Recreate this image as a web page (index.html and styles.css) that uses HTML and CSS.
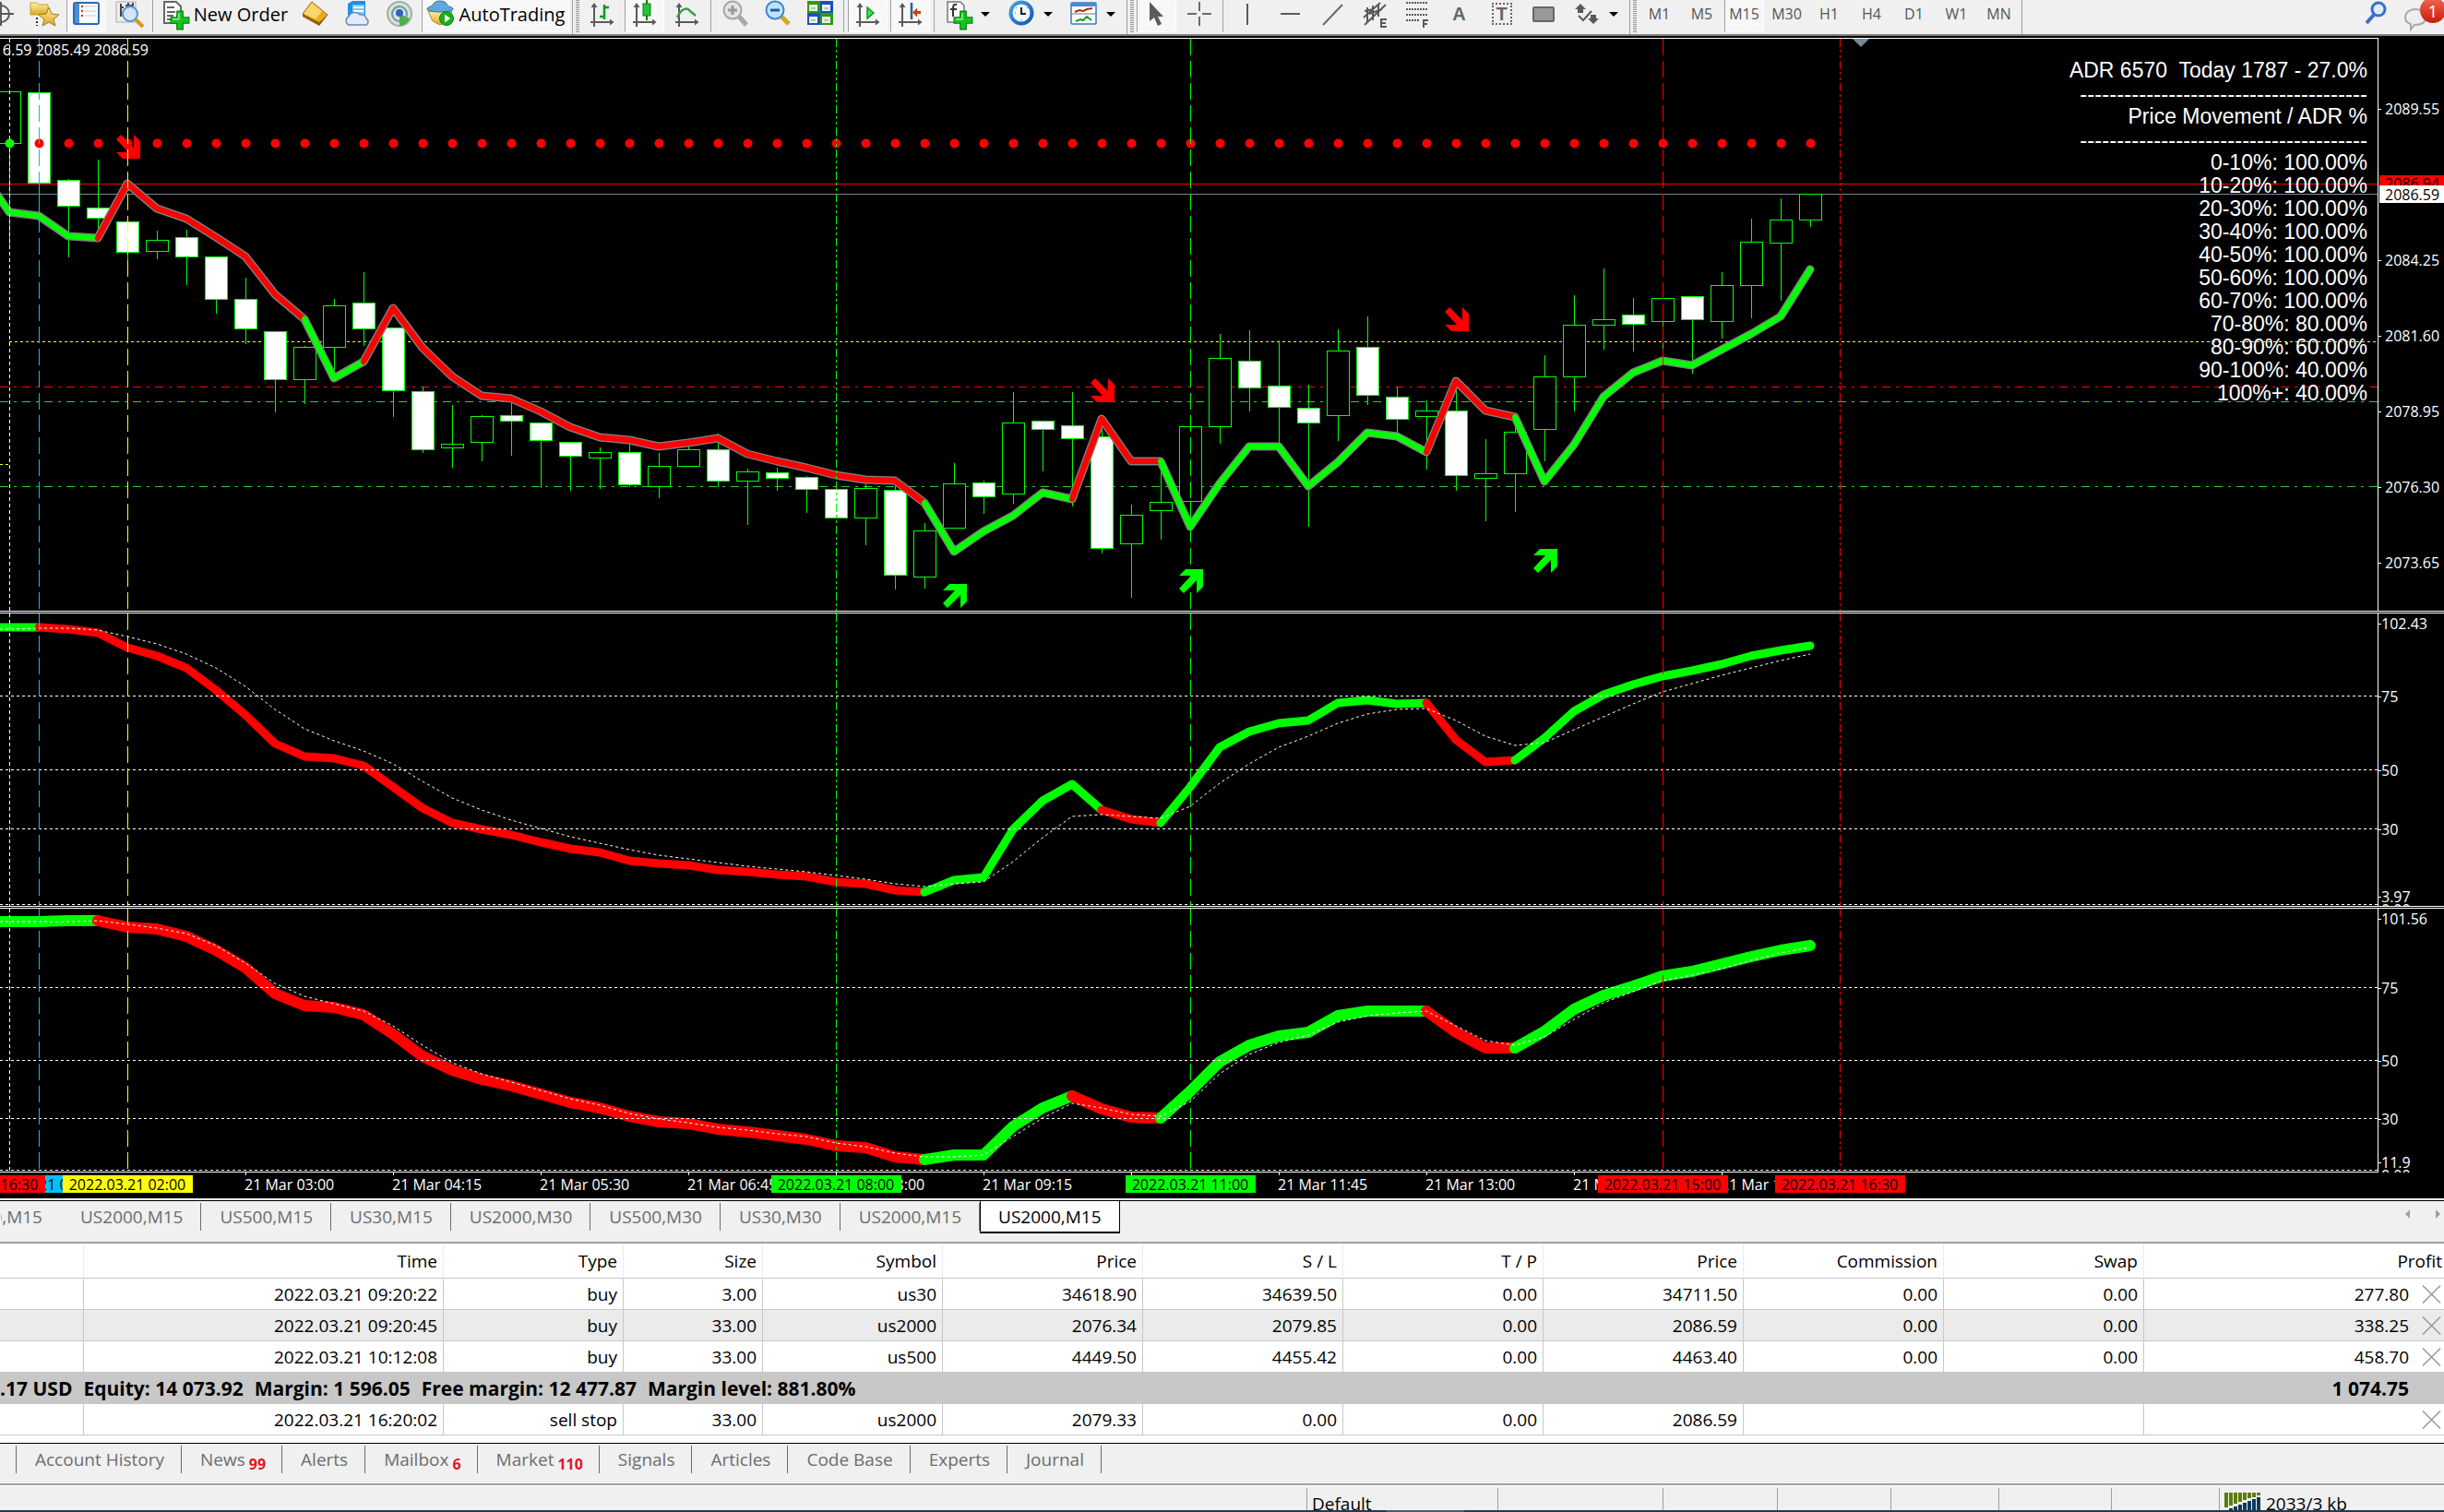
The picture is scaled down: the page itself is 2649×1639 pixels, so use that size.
FILE: index.html
```html
<!DOCTYPE html>
<html lang="en">
<head>
<meta charset="utf-8">
<title>US2000,M15</title>
<link rel="stylesheet" href="styles.css">
</head>
<body>
<svg class="defs" aria-hidden="true">
  <defs>
    <linearGradient id="gold" x1="0" y1="0" x2="0" y2="1"><stop offset="0" stop-color="#fff2a0"/><stop offset="1" stop-color="#dba520"/></linearGradient>
    <linearGradient id="sky" x1="0" y1="0" x2="1" y2="1"><stop offset="0" stop-color="#4aa9ea"/><stop offset="1" stop-color="#0a4fa8"/></linearGradient>
    <symbol id="axes" viewBox="0 0 32 34"><path d="M7 5V29M3 24H27" stroke="#5a5a5a" stroke-width="2" fill="none"/><path d="M3.500 8L7 3l3.500 5zM24 20.500L28.500 24 24 27.500z" fill="#5a5a5a"/></symbol>
    <symbol id="plus" viewBox="0 0 20 20"><path d="M7 1h6v6h6v6h-6v6H7v-6H1V7h6z" fill="#16c41c" stroke="#0a7a10" stroke-width="1"/><path d="M9 3v6H3" stroke="#7ef07e" stroke-width="1.500" fill="none"/></symbol>
    <symbol id="cross" viewBox="0 0 22 22"><path d="M1 1L21 21M21 1L1 21" stroke="#979797" stroke-width="1.500" fill="none"/></symbol>
  </defs>
</svg>

<header class="toolbar">
  <div class="group">
    <button class="tool" aria-label="Crosshair"><svg viewBox="0 0 32 34"><circle cx="15" cy="15" r="9" fill="none" stroke="#5a5a5a" stroke-width="2"/><path d="M15 2V28M2 15H29" stroke="#5a5a5a" stroke-width="2"/></svg></button>
    <button class="tool" aria-label="Navigator"><svg viewBox="0 0 32 34"><path d="M1 3h7l2 2h10v11H1z" fill="url(#gold)" stroke="#c9a227"/><path d="M8 19v9" stroke="#333" stroke-width="2" stroke-dasharray="2 2"/><path d="M21 8l3 7 8 1-6 5 2 7-7-4-7 4 2-7-6-5 8-1z" fill="url(#gold)" stroke="#a97a15"/></svg></button>
    <button class="tool pressed" aria-label="Market Watch"><svg viewBox="0 0 32 34"><rect x="2" y="3" width="27" height="23" rx="2" fill="#fff" stroke="#2a6ab5" stroke-width="2"/><path d="M3 4h5v21H3z" fill="#4a8fd8"/><path d="M11 6v12" stroke="#e22" stroke-width="2" stroke-dasharray="2 3"/><path d="M14 7h12M14 12h12M14 17h12" stroke="#b9c6dc" stroke-width="1"/></svg></button>
    <button class="tool" aria-label="Data Window"><svg viewBox="0 0 32 34"><path d="M2 2h21v22H2z" fill="#eee" stroke="#aaa"/><path d="M7 4v14M6 8h4M15 3v8M12 6h8M20 3v8" stroke="#444" stroke-width="2"/><circle cx="17" cy="15" r="8" fill="#cfe4f8" fill-opacity=".9" stroke="#5b93cf" stroke-width="2"/><path d="M23 21l8 8" stroke="#d29a1c" stroke-width="4"/></svg></button>
    <span class="sep"></span>
    <button class="tool order"><svg viewBox="0 0 32 34"><path d="M4 2h13l5 5v18H4z" fill="#fff" stroke="#666" stroke-width="2"/><path d="M7 8h8M7 13h9M7 17h7M7 21h5" stroke="#666" stroke-width="2"/><use href="#plus" x="10" y="11" width="22" height="22"/></svg>New Order</button>
    <button class="tool" aria-label="MetaEditor"><svg viewBox="0 0 32 34"><path d="M13 2l17 14-9 11L3 15z" fill="#e8ae22" stroke="#9a6510"/><path d="M13 3l11 9-7 9L4 15z" fill="#f9d66b"/><path d="M3 15l18 9 9-8-9 12L3 18z" fill="#9a5d0c"/></svg></button>
    <button class="tool" aria-label="VPS"><svg viewBox="0 0 32 34"><path d="M6 4l5-3h14v16H6z" fill="#1e90e8"/><path d="M11 5h13v12H11z" fill="#7cc6fb"/><path d="M12 8h11M12 12h11" stroke="#fff" stroke-width="2"/><path d="M7 27a5 5 0 0 1 0-9 7 7 0 0 1 12-2 6 6 0 0 1 7 4 4 4 0 0 1 0 7z" fill="#e3eafa" stroke="#6d86b8" stroke-width="1.500"/></svg></button>
    <button class="tool" aria-label="Signals"><svg viewBox="0 0 32 34"><circle cx="16" cy="15" r="13" fill="#d8e2dc" stroke="#9fb2a8" stroke-width="2"/><circle cx="16" cy="15" r="8" fill="none" stroke="#6f93a3" stroke-width="2"/><path d="M16 15v13a13 13 0 0 0 11-8z" fill="#4cae4c"/><circle cx="16" cy="14" r="4" fill="#2a62c8"/></svg></button>
    <button class="tool auto pressed"><svg viewBox="0 0 32 34"><path d="M2 12h26l-5 12-8 3-8-4z" fill="url(#gold)" stroke="#b98d1c"/><path d="M1 10c0-3 5-2 7-6 2-4 12-4 14 0 1 4 7 3 7 6 0 4-28 4-28 0z" fill="#5fa8d8" stroke="#2f78ab"/><circle cx="22" cy="20" r="7.500" fill="#18b01c" stroke="#0b7c10"/><path d="M20 15.500l6 4.500-6 4.500z" fill="#fff"/></svg>AutoTrading</button>
    <span class="sep edge"></span><span class="grip"></span>
  </div>
  <div class="group">
    <button class="tool" aria-label="Bar Chart"><svg viewBox="0 0 32 34"><use href="#axes" width="32" height="34"/><path d="M18 5v16M18 8h5M18 18h-5" stroke="#0c9a1a" stroke-width="2.500"/></svg></button>
    <button class="tool pressed" aria-label="Candlesticks"><svg viewBox="0 0 32 34"><use href="#axes" width="32" height="34"/><path d="M18 0v22" stroke="#0a7d16" stroke-width="2"/><rect x="14" y="4" width="8" height="13" fill="#23c43a" stroke="#0a7d16"/></svg></button>
    <button class="tool" aria-label="Line Chart"><svg viewBox="0 0 32 34"><use href="#axes" width="32" height="34"/><path d="M5 19C10 8 16 8 19 12l6 5" stroke="#3c9a4a" stroke-width="2.500" fill="none"/></svg></button>
    <span class="sep thin"></span>
    <button class="tool" aria-label="Zoom In"><svg viewBox="0 0 32 34"><path d="M20 18l8 9" stroke="#a8a8a8" stroke-width="5"/><circle cx="13" cy="11" r="9.500" fill="#e4e4e4" stroke="#a5a5a5" stroke-width="2"/><path d="M8 11h10M13 6v10" stroke="#999" stroke-width="3"/></svg></button>
    <button class="tool" aria-label="Zoom Out"><svg viewBox="0 0 32 34"><path d="M20 18l8 8" stroke="#d9a51e" stroke-width="5"/><circle cx="13" cy="11" r="9.500" fill="#bfe3fb" stroke="#3b86d0" stroke-width="2"/><path d="M8 11h10" stroke="#1c5fae" stroke-width="3"/></svg></button>
    <button class="tool" aria-label="Tile Windows"><svg viewBox="0 0 32 34"><path d="M2 1h14v13H2zM16 14h14v13H16z" fill="#2f9a12"/><path d="M16 1h14v13H16zM2 14h14v13H2z" fill="#1d4fc4"/><path d="M4 5h9v7H4zM18 5h9v7h-9zM4 18h9v7H4zM18 18h9v7h-9z" fill="#e8f0e8"/><path d="M6 9h5M20 9h5M6 22h5M20 22h5" stroke="#8a9a8a" stroke-width="1"/></svg></button>
    <span class="sep thin"></span>
    <button class="tool pressed" aria-label="Auto Scroll"><svg viewBox="0 0 32 34"><use href="#axes" width="32" height="34"/><path d="M15 8l7 6-7 6z" fill="#4cdc5c" stroke="#0a9a1a" stroke-width="1.500"/></svg></button>
    <button class="tool pressed" aria-label="Chart Shift"><svg viewBox="0 0 32 34"><use href="#axes" width="32" height="34"/><path d="M17 3v18" stroke="#14689c" stroke-width="2.500"/><path d="M18 13.500l5-5v3.500h4v3h-4v3.500z" fill="#d2400e"/></svg></button>
    <span class="sep thin"></span>
    <button class="tool drop" aria-label="Indicators"><svg viewBox="0 0 32 34"><path d="M4 2h14l4 4v18H4z" fill="#fff" stroke="#777" stroke-width="1.500"/><path d="M14 5c-4-1-4 2-4 5v8M7 10h7" stroke="#333" stroke-width="2" fill="none"/><use href="#plus" x="10" y="11" width="22" height="22"/></svg><span class="caret"></span></button>
    <button class="tool drop" aria-label="Periods"><svg viewBox="0 0 32 34"><circle cx="16" cy="14" r="13.500" fill="url(#sky)"/><circle cx="16" cy="14" r="9.500" fill="#f4f8fc"/><path d="M16 8v7h5" stroke="#222" stroke-width="2" fill="none"/><path d="M9 14h1M22 9l1-1M16 21v1M11 9l-1-1" stroke="#666"/></svg><span class="caret"></span></button>
    <button class="tool drop" aria-label="Templates"><svg viewBox="0 0 32 34"><rect x="2" y="3" width="27" height="23" rx="1" fill="#fff" stroke="#3a78c0" stroke-width="1.500"/><path d="M2 3h27v4H2z" fill="#4a8bd4"/><path d="M2 15h27" stroke="#777"/><path d="M6 13l5-2 4 1 4-2 6-1" stroke="#a83010" stroke-width="2" fill="none"/><path d="M7 23l5-2 3 1 4-4 5 4" stroke="#189a28" stroke-width="2" fill="none"/></svg><span class="caret"></span></button>
    <span class="sep edge"></span><span class="grip"></span>
  </div>
  <div class="group">
    <button class="tool pressed" aria-label="Cursor"><svg viewBox="0 0 32 34"><path d="M8 2v21l5-4 4 9 4-2-4-8h6z" fill="#5a5a5a"/></svg></button>
    <button class="tool" aria-label="Crosshair tool"><svg viewBox="0 0 32 34"><path d="M16 2v10M16 18v10M3 15h10M19 15h10" stroke="#6a6a6a" stroke-width="2"/></svg></button>
    <span class="sep thin"></span>
    <button class="tool" aria-label="Vertical Line"><svg viewBox="0 0 32 34"><path d="M16 4v23" stroke="#5a5a5a" stroke-width="2"/></svg></button>
    <button class="tool" aria-label="Horizontal Line"><svg viewBox="0 0 32 34"><path d="M6 15h21" stroke="#5a5a5a" stroke-width="2"/></svg></button>
    <button class="tool" aria-label="Trendline"><svg viewBox="0 0 32 34"><path d="M6 27L27 5" stroke="#6a6a6a" stroke-width="2"/></svg></button>
    <button class="tool" aria-label="Equidistant Channel"><svg viewBox="0 0 32 34"><path d="M4 19L22 3M5 27L28 5M5 12l9-2M8 8v16M14 6v16M20 4v14M10 15l14-5" stroke="#5a5a5a" stroke-width="2" fill="none"/><path d="M29 21h-6v8h6M23 25h5" stroke="#5a5a5a" stroke-width="2" fill="none"/></svg></button>
    <button class="tool" aria-label="Fibonacci Retracement"><svg viewBox="0 0 32 34"><path d="M4 3h24M4 10h24M4 16h24M4 22h14" stroke="#5a5a5a" stroke-width="2" stroke-dasharray="2 1"/><path d="M28 22h-5v8M23 26h4" stroke="#5a5a5a" stroke-width="2" fill="none"/></svg></button>
    <button class="tool glyph">A</button>
    <button class="tool glyph boxed"><span>T</span></button>
    <button class="tool" aria-label="Rectangle"><svg viewBox="0 0 32 34"><rect x="4" y="8" width="22" height="15" rx="1" fill="#999" stroke="#666" stroke-width="2"/></svg></button>
    <button class="tool drop" aria-label="Arrows"><svg viewBox="0 0 32 34"><path d="M9 4l6 6H3zM12 10v4H6v-4zM23 26l-6-6h12zM20 20v-4h6v4z" fill="#5a5a5a"/><path d="M7 17l5 5 9-10" stroke="#5a5a5a" stroke-width="2" fill="none"/></svg><span class="caret"></span></button>
    <span class="sep edge"></span><span class="grip"></span>
  </div>
  <div class="group">
    <button class="tool frame">M1</button>
    <button class="tool frame">M5</button>
    <button class="tool frame pressed">M15</button>
    <button class="tool frame">M30</button>
    <button class="tool frame">H1</button>
    <button class="tool frame">H4</button>
    <button class="tool frame">D1</button>
    <button class="tool frame">W1</button>
    <button class="tool frame">MN</button>
    <span class="sep edge"></span>
  </div>
  <div class="group right">
    <button class="tool" aria-label="Search"><svg viewBox="0 0 32 34"><path d="M14 16L6 25" stroke="#3a6fc8" stroke-width="4"/><circle cx="19" cy="10" r="7" fill="#dfeafc" stroke="#3a6fc8" stroke-width="3"/></svg></button>
    <button class="tool chat" aria-label="1 message"><svg viewBox="0 0 40 34"><path d="M3 19c0-12 22-12 22 0 0 6-6 8-12 8l-4 5v-6c-4-1-6-4-6-7z" fill="#eee" stroke="#a9a9a9" stroke-width="2"/></svg><span class="count">1</span></button>
  </div>
</header>

<main>
  <section class="chart" aria-label="US2000,M15 chart">
    <div class="pane">
      <div class="plot first">
        <svg class="canvas price" id="price"></svg>
        <div class="adr">
          <p>ADR 6570&nbsp; Today 1787 - 27.0%</p>
          <p class="rule">---------------------------------------</p>
          <p>Price Movement / ADR %</p>
          <p class="rule">---------------------------------------</p>
          <p>0-10%: 100.00%</p>
          <p>10-20%: 100.00%</p>
          <p>20-30%: 100.00%</p>
          <p>30-40%: 100.00%</p>
          <p>40-50%: 100.00%</p>
          <p>50-60%: 100.00%</p>
          <p>60-70%: 100.00%</p>
          <p>70-80%: 80.00%</p>
          <p>80-90%: 60.00%</p>
          <p>90-100%: 40.00%</p>
          <p>100%+: 40.00%</p>
        </div>
      </div>
      <svg class="axis" id="price-axis"></svg>
    </div>
    <div class="divider"></div>
    <div class="pane">
      <div class="plot"><svg class="canvas fast" id="fast"></svg></div>
      <svg class="axis" id="fast-axis"></svg>
    </div>
    <div class="divider"></div>
    <div class="pane">
      <div class="plot last"><svg class="canvas slow" id="slow"></svg></div>
      <svg class="axis" id="slow-axis"></svg>
    </div>
    <svg class="times" id="times"></svg>
  </section>

  <nav class="tabs charts" aria-label="Charts">
    <button class="tab cut">US500,M15</button>
    <button class="tab">US2000,M15</button>
    <button class="tab">US500,M15</button>
    <button class="tab">US30,M15</button>
    <button class="tab">US2000,M30</button>
    <button class="tab">US500,M30</button>
    <button class="tab">US30,M30</button>
    <button class="tab">US2000,M15</button>
    <button class="tab active">US2000,M15</button>
    <span class="scroll"><button class="arrow left" aria-label="Scroll left"></button><button class="arrow" aria-label="Scroll right"></button></span>
  </nav>

  <section class="terminal">
    <table>
      <colgroup><col class="c-order"><col class="c-time"><col class="c-type"><col class="c-size"><col class="c-type"><col class="c-price"><col class="c-price"><col class="c-price"><col class="c-price"><col class="c-price"><col class="c-price"><col></colgroup>
      <thead>
        <tr><th></th><th>Time</th><th>Type</th><th>Size</th><th>Symbol</th><th>Price</th><th>S / L</th><th>T / P</th><th>Price</th><th>Commission</th><th>Swap</th><th class="profit">Profit</th></tr>
      </thead>
      <tbody>
        <tr><td></td><td>2022.03.21 09:20:22</td><td>buy</td><td>3.00</td><td>us30</td><td>34618.90</td><td>34639.50</td><td>0.00</td><td>34711.50</td><td>0.00</td><td>0.00</td><td class="profit"><span>277.80<button class="close" aria-label="Close order"><svg><use href="#cross"/></svg></button></span></td></tr>
        <tr class="alt"><td></td><td>2022.03.21 09:20:45</td><td>buy</td><td>33.00</td><td>us2000</td><td>2076.34</td><td>2079.85</td><td>0.00</td><td>2086.59</td><td>0.00</td><td>0.00</td><td class="profit"><span>338.25<button class="close" aria-label="Close order"><svg><use href="#cross"/></svg></button></span></td></tr>
        <tr><td></td><td>2022.03.21 10:12:08</td><td>buy</td><td>33.00</td><td>us500</td><td>4449.50</td><td>4455.42</td><td>0.00</td><td>4463.40</td><td>0.00</td><td>0.00</td><td class="profit"><span>458.70<button class="close" aria-label="Close order"><svg><use href="#cross"/></svg></button></span></td></tr>
        <tr class="balance"><td colspan="11"><span class="sum"><span>.17 USD</span><span>Equity: 14 073.92</span><span>Margin: 1 596.05</span><span>Free margin: 12 477.87</span><span>Margin level: 881.80%</span></span></td><td class="total">1 074.75</td></tr>
        <tr><td></td><td>2022.03.21 16:20:02</td><td>sell stop</td><td>33.00</td><td>us2000</td><td>2079.33</td><td>0.00</td><td>0.00</td><td>2086.59</td><td colspan="2"></td><td class="profit"><span><button class="close" aria-label="Delete order"><svg><use href="#cross"/></svg></button></span></td></tr>
      </tbody>
    </table>
  </section>

  <nav class="tabs panels" aria-label="Terminal">
    <button class="tab cut" aria-label="Trade"></button>
    <button class="tab">Account History</button>
    <button class="tab">News<b>99</b></button>
    <button class="tab">Alerts</button>
    <button class="tab">Mailbox<b>6</b></button>
    <button class="tab">Market<b>110</b></button>
    <button class="tab">Signals</button>
    <button class="tab">Articles</button>
    <button class="tab">Code Base</button>
    <button class="tab">Experts</button>
    <button class="tab">Journal</button>
  </nav>
</main>

<footer>
  <div class="status">
    <span class="help"></span>
    <span>Default</span>
    <span></span><span></span><span></span><span></span><span></span><span></span>
    <span class="traffic"><svg viewBox="0 0 40 26"><path d="M0 0h4v16H0zM5 0h4v14H5zM10 0h4v12h-4zM15 0h4v10h-4zM20 0h4v8h-4zM25 0h4v6h-4zM30 0h4v5h-4zM35 0h4v3h-4z" fill="#5c7c0c"/><path d="M0 19h4v7H0zM5 17h4v9H5zM10 15h4v11h-4zM15 13h4v13h-4zM20 11h4v15h-4zM25 9h4v17h-4zM30 7h4v19h-4zM35 5h4v21h-4z" fill="#073b5c"/></svg>2033/3 kb</span>
  </div>
  <div class="taskbar"><span></span></div>
</footer>
<script src="chart.js"></script>
</body>
</html>
```
FILE: styles.css
```css
* { box-sizing: border-box; }
body {
  margin: 0;
  background: #f0f0f0;
  color: #000;
  font: 19px/24px "Open Sans", "Noto Sans", sans-serif;
  overflow-x: hidden;
}
button { font: inherit; color: inherit; background: none; border: 0; padding: 0; margin: 0; }
p { margin: 0; }
.defs { position: absolute; width: 0; height: 0; }

/* toolbar */
.toolbar { display: flex; height: 39px; margin-left: -20px; border-bottom: 2px solid #808080; overflow: hidden; font-size: 20px; }
.group { display: flex; gap: 3px; padding-right: 3px; flex: none; }
.group.right { margin-left: auto; padding-right: 0; }
.tool { width: 43px; height: 35px; display: flex; justify-content: center; align-items: flex-start; flex: none; white-space: nowrap; line-height: 31px; border: 1px solid transparent; border-top: 0; }
.tool svg { width: 32px; height: 34px; flex: none; }
.tool.pressed {
  border-color: #a0a0a0 #fff #fff #a0a0a0;
  background: repeating-conic-gradient(#fff 0 25%, #f0f0f0 0 50%) 0 0 / 2px 2px;
}
.tool.order { width: 146px; gap: 4px; }
.tool.auto { width: 160px; gap: 4px; }
.tool.drop { width: 65px; justify-content: flex-start; padding-left: 5px; gap: 8px; }
.caret { border: 5px solid transparent; border-top-color: #000; border-bottom: 0; margin-top: 13px; }
.tool.frame { font: 16px/31px "Open Sans", sans-serif; color: #555; }
.tool.glyph { font: bold 20px/31px "Liberation Sans", sans-serif; color: #666; }
.boxed span { width: 22px; height: 24px; line-height: 24px; margin-top: 3px; border: 2px dotted #666; display: flex; justify-content: center; align-items: center; }
.sep { width: 1px; height: 35px; background: #a0a0a0; margin: 0 1px; flex: none; }
.sep.edge { height: 37px; margin: 0; }
.grip { width: 4px; height: 35px; background: repeating-linear-gradient(#999 0 1px, transparent 1px 2px); flex: none; }
.tool.chat { width: 50px; position: relative; }
.tool.chat svg { width: 40px; }
.count { position: absolute; right: -3px; top: -3px; width: 28px; height: 28px; border-radius: 50%; background: linear-gradient(#ee6a50, #cc1a0a); color: #fff; font-size: 19px; line-height: 30px; text-align: center; }

/* chart */
.chart { background: #000; color: #fff; padding-top: 2px; }
.chart svg { display: block; font: 16px "Open Sans", "Noto Sans", sans-serif; overflow: hidden; }
.pane { display: flex; }
.plot { flex: 1; min-width: 0; position: relative; border-right: 1px solid #fff; }
.plot.first { border-top: 1px solid #fff; }
.plot.last { border-bottom: 1px solid #fff; }
.canvas { width: 100%; }
.price { height: 620px; }
.fast { height: 317px; }
.slow { height: 285px; }
.axis { width: 71px; height: auto; flex: none; }
.divider { height: 3px; border: solid #fff; border-width: 1px 0; }
.times { width: 100%; height: 28px; }
.adr { position: absolute; top: 22px; right: 11px; text-align: right; font: 23px/25px "Liberation Sans", Arial, sans-serif; }
.adr .rule { font-size: 24px; }

/* tab strips */
.tabs { display: flex; border-top: 1px solid #000; color: #6d6d6d; }
.charts { height: 47px; margin-top: 2px; border-bottom: 2px solid #a0a0a0; }
.panels { height: 43px; }
.tab { position: relative; padding: 0 18px 0 19px; white-space: nowrap; flex: none; line-height: 35px; height: 35px; border: solid transparent; border-width: 0 1px; display: flex; }
.charts .tab { padding: 0 19px; }
.tab::after { content: ""; position: absolute; right: -1px; top: 2px; height: 30px; width: 1px; background: #6d6d6d; }
.charts .active { background: #fff; color: #000; border: 1px solid #000; border-top: 0; border-bottom-width: 2px; }
.tab.active::after { display: none; }
.charts .cut { width: 67px; justify-content: flex-end; padding: 0 20px 0 0; overflow: hidden; }
.panels .cut { width: 18px; padding: 0; }
.panels .tab { line-height: 34px; }
.panels b { color: #e81123; font-size: 16px; line-height: 44px; margin: 0 -1px 0 4px; }
.scroll { margin-left: auto; display: flex; gap: 28px; padding: 9px 4px; }
.arrow { border: 5px solid transparent; border-left-color: #a0a0a0; border-right: 0; height: 10px; }
.arrow.left { border: 5px solid transparent; border-right-color: #a0a0a0; border-left: 0; }

/* orders */
.terminal { background: #fff; padding-bottom: 8px; }
table { width: 100%; table-layout: fixed; border-collapse: separate; border-spacing: 0; }
.c-order { width: 91px; }
.c-time { width: 390px; }
.c-type { width: 195px; }
.c-size { width: 151px; }
.c-price { width: 217px; }
th, td { padding: 0 6px 0 0; height: 34px; text-align: right; font-weight: 400; border: solid #c8c8c8; border-width: 0 1px 1px 0; white-space: nowrap; overflow: hidden; }
th { height: 38px; border-right-color: #ececec; }
th.profit { padding: 0 2px 0 0; border-right: 0; }
td.profit { padding: 0 3px 0 0; border-right: 0; }
.profit span { display: flex; justify-content: flex-end; align-items: center; gap: 14px; }
.close { width: 21px; height: 22px; }
.close svg { width: 21px; height: 22px; display: block; }
.alt { background: #ebebeb; }
.balance td { background: #c8c8c8; font-weight: 700; border-right: 0; font-size: 21px; }
.balance .sum { display: flex; gap: 12px; text-align: left; }
.balance .total { padding-right: 38px; }

/* status bar */
footer { border-top: 2px solid #a0a0a0; box-shadow: inset 0 1px #fff; margin-top: 1px; }
.status { display: grid; grid-template-columns: 1416fr 207fr 179fr 124fr 123fr 117fr 122fr 117fr 244fr; height: 27px; padding-top: 3px; overflow: hidden; }
.status span { border-left: 1px solid #a0a0a0; padding: 5px 0 0 5px; height: 32px; white-space: nowrap; }
.status .help { border: 0; }
.traffic { display: flex; gap: 5px; }
.traffic svg { width: 40px; height: 26px; flex: none; }
.taskbar { height: 4px; background: #263a4a; display: flex; }
.taskbar span { width: 85px; margin-left: 1502px; background: #4a5c6a; }
```
FILE: chart.js
```js
const NS = "http://www.w3.org/2000/svg";
const GREEN = "#00ff00", RED = "#ff0000";
const STEP = 32, FIRST = 10;
const barX = i => FIRST + i * STEP;

function add(parent, tag, attrs, text) {
  const el = document.createElementNS(NS, tag);
  for (const key in attrs) el.setAttribute(key, attrs[key]);
  if (text !== undefined) el.textContent = text;
  parent.appendChild(el);
  return el;
}

// [top, bottom, high, low, falling]
const candles = [
  [99,155,99,265,0],[100,198,100,234,1],[195,223,194,278,1],[225,236,173,259,1],[240,273,240,281,1],
  [260,272,250,280,0],[257,278,249,308,1],[278,324,278,339,1],[324,356,301,372,1],[359,411,359,446,1],
  [376,411,375,437,0],[331,376,324,410,0],[328,356,295,374,1],[355,423,355,451,1],[424,487,419,490,1],
  [481,485,439,506,0],[451,479,450,499,0],[450,456,436,493,1],[458,477,458,528,1],[479,494,479,531,1],
  [490,496,485,529,0],[490,525,481,527,1],[505,527,491,539,0],[487,505,483,505,0],[487,521,470,527,1],
  [511,521,508,568,0],[512,518,507,531,1],[517,530,516,555,1],[530,561,530,561,1],[529,561,525,590,0],
  [531,623,527,638,1],[575,625,567,637,0],[524,572,502,572,0],[523,538,521,556,1],[458,535,425,545,0],
  [456,465,456,510,1],[461,475,425,548,1],[473,594,455,599,1],[558,589,547,647,0],[544,553,502,584,0],
  [462,543,462,573,0],[388,462,362,480,0],[391,420,358,445,1],[418,441,369,483,1],[442,458,417,570,1],
  [380,450,357,477,0],[376,428,343,438,1],[430,454,419,472,1],[445,451,434,508,0],[445,515,416,531,1],
  [513,518,476,564,0],[468,513,453,554,0],[408,465,385,499,0],[352,408,320,445,0],[346,352,291,378,0],
  [341,351,323,380,1],[323,348,323,377,0],[321,346,321,404,1],[309,348,295,366,0],[262,309,237,344,0],
  [238,263,215,325,0],[210,238,210,245,0]
];

const average = [230,234,256,258,199,226,237,257,278,319,346,410,392,334,377,408,429,432,446,463,474,477,484,480,
  475,492,500,507,515,520,521,545,598,576,559,534,541,454,500,500,571,524,484,484,527,501,469,473,490,413,445,452,
  522,482,430,404,391,396,379,362,343,292];
const fast = [680,680,682,686,702,711,724,748,775,806,820,822,830,853,876,892,899,905,913,920,924,933,936,938,943,
  945,948,950,956,958,965,967,954,951,899,868,850,878,888,892,853,810,793,784,781,762,759,763,762,802,826,824,800,
  771,753,742,733,727,720,711,705,700];
const fastSignal = [682,681,681,683,690,698,709,724,744,769,790,803,814,828,847,865,878,889,898,907,914,921,927,931,
  935,939,942,945,949,953,958,961,958,956,934,908,885,883,885,887,874,849,828,810,798,784,774,769,768,781,798,808,
  805,791,777,763,750,741,732,724,716,709];
const slow = [999,999,998,998,1005,1007,1015,1030,1049,1077,1090,1092,1100,1121,1145,1160,1170,1177,1186,1195,1201,
  1210,1216,1218,1224,1227,1231,1235,1242,1244,1254,1257,1252,1252,1221,1201,1188,1202,1211,1212,1183,1151,1133,
  1123,1119,1101,1096,1096,1096,1119,1136,1136,1118,1094,1079,1069,1058,1053,1045,1037,1030,1025];
const slowSignal = [999,999,999,998,1002,1006,1012,1025,1044,1066,1080,1088,1096,1112,1133,1152,1164,1173,1182,1191,
  1198,1207,1213,1217,1222,1225,1229,1232,1239,1243,1250,1254,1254,1252,1232,1212,1196,1201,1208,1210,1194,1164,
  1143,1130,1122,1108,1101,1098,1096,1112,1128,1133,1124,1105,1087,1075,1063,1057,1050,1041,1033,1027];

const LONG = "18 6", DDD = "9 3 3 3 3 3", DOT = "3 3", DASHDOT = "9 6 3 6";
const marks = [
  [10, "#ffffff", "4 3"], [42, "#00bfff", LONG], [138, "#ffff00", LONG], [906, GREEN, DDD],
  [1290, GREEN, LONG], [1802, RED, LONG], [1994, RED, DDD]
];

function layer(id, top) {
  return add(document.getElementById(id), "g", { transform: `translate(0 ${-top})` });
}
function level(g, y, color, dash, x = 0, end = "100%") {
  add(g, "line", { x1: x, x2: end, y1: y + 0.5, y2: y + 0.5, stroke: color, "stroke-dasharray": dash || "none" });
}
function verticals(g, top, bottom) {
  for (const [x, color, dash] of marks)
    add(g, "line", { x1: x + 0.5, x2: x + 0.5, y1: top, y2: bottom, stroke: color, "stroke-dasharray": dash });
}
function curve(g, data, from, to, attrs, lead) {
  const pts = [];
  if (from === 0) pts.push(`-6,${lead}`);
  for (let i = from; i <= to; i++) pts.push(`${barX(i)},${data[i]}`);
  add(g, "polyline", { points: pts.join(" "), fill: "none", "stroke-linejoin": "round", "stroke-linecap": "round", ...attrs });
}
// flips: bar indexes at which the colour changes, starting green
function twoTone(g, data, flips, width, lead) {
  let from = 0;
  [...flips, data.length - 1].forEach((to, n) => {
    curve(g, data, from, to, { stroke: n % 2 ? RED : GREEN, "stroke-width": width }, lead);
    from = to;
  });
}

// price pane
{
  const g = layer("price", 42);
  level(g, 370, "#ffff00", DOT, 10);
  level(g, 503, "#ffff00", DOT, 0, 10);
  level(g, 419, RED, DASHDOT);
  level(g, 435, "#32cd32", DASHDOT);
  level(g, 527, "#32cd32", DASHDOT);
  level(g, 199, RED);
  level(g, 210, "#778899");
  candles.forEach(([top, bottom, high, low, falling], i) => {
    const x = barX(i) + 0.5;
    add(g, "line", { x1: x, x2: x, y1: high, y2: low + 1, stroke: GREEN });
    add(g, "rect", { x: x - 12, y: top + 0.5, width: 24, height: bottom - top, fill: falling ? "#fff" : "#000", stroke: GREEN });
    add(g, "circle", { cx: x, cy: 155.5, r: 5, fill: i ? RED : GREEN });
  });
  curve(g, average, 0, 61, { stroke: "#808080", "stroke-width": 9 }, 207);
  twoTone(g, average, [3, 10, 12, 31, 36, 39, 48, 51], 6, 207);
  const runs = [[3, 10, RED], [10, 12, GREEN], [12, 31, RED], [31, 36, GREEN], [36, 39, RED], [39, 48, GREEN], [48, 51, RED], [51, 61, GREEN]];
  for (const [from, to, stroke] of runs) curve(g, average, from, to, { stroke, "stroke-width": 6 });
  const down = "M5 0L19 14V0L26 7V26H7L0 19H13L0 5Z", up = "M5 26L19 12V26L26 19V0H7L0 7H13L0 21Z";
  for (const [i, y] of [[4, 146], [37, 410], [49, 333]])
    add(g, "path", { d: down, fill: RED, transform: `translate(${barX(i) - 12} ${y})` });
  for (const [i, y] of [[32, 633], [40, 617], [52, 595]])
    add(g, "path", { d: up, fill: GREEN, transform: `translate(${barX(i) - 12} ${y})` });
  verticals(g, 42, 662);
  add(g, "path", { d: "M2008 42h18l-9 9z", fill: "#778899" });
  add(g, "text", { x: 161, y: 60, "text-anchor": "end", fill: "#fff" }, "6.59 2085.49 2086.59");
}

// indicator panes
function indicator(id, top, bottom, main, signal, levels, flips, width) {
  const g = layer(id, top);
  twoTone(g, main, flips, width, main[0]);
  for (const y of levels) level(g, y, "#ffffff", DOT);
  curve(g, signal, 0, 61, { stroke: "#fff", "stroke-width": 1, "stroke-dasharray": DOT, "stroke-linecap": "butt" }, signal[0]);
  verticals(g, top, bottom);
}
indicator("fast", 665, 982, fast, fastSignal, [754, 834, 898, 980], [1, 31, 37, 39, 48, 51], 9);
indicator("slow", 985, 1270, slow, slowSignal, [1070, 1149, 1212, 1268], [3, 31, 36, 39, 48, 51], 12);

// value axes
function labels(id, top, x, rows) {
  const g = layer(id, top);
  for (const [value, y] of rows) {
    add(g, "text", { x, y: y + 6, fill: "#fff" }, value);
    add(g, "line", { x1: 0, x2: 3, y1: y + 0.5, y2: y + 0.5, stroke: "#fff" });
  }
  return g;
}
const axis = labels("price-axis", 41, 7, [["2089.55", 118], ["2084.25", 282], ["2081.60", 364], ["2078.95", 446], ["2076.30", 528], ["2073.65", 610]]);
add(axis, "rect", { x: 1, y: 190, width: 70, height: 19, fill: RED });
add(axis, "text", { x: 7, y: 205, fill: "#000" }, "2086.94");
add(axis, "rect", { x: 1, y: 201, width: 70, height: 19, fill: "#fff" });
add(axis, "text", { x: 7, y: 217, fill: "#000" }, "2086.59");
labels("fast-axis", 665, 3, [["102.43", 676], ["75", 755], ["50", 835], ["30", 899], ["3.97", 972], ["0.00", 986]]);
labels("slow-axis", 985, 3, [["101.56", 996], ["75", 1071], ["50", 1150], ["30", 1213], ["11.9", 1260], ["0.00", 1274]]);

// time axis
{
  const g = layer("times", 1271);
  const stamps = { 8: "03:00", 13: "04:15", 18: "05:30", 23: "06:45", 28: "08:00", 33: "09:15", 38: "10:30", 43: "11:45", 48: "13:00", 53: "14:15", 58: "15:30" };
  for (const i in stamps) {
    add(g, "line", { x1: barX(+i) + 0.5, x2: barX(+i) + 0.5, y1: 1271, y2: 1274, stroke: "#fff" });
    add(g, "text", { x: barX(+i) - 1, y: 1290, fill: "#fff" }, "21 Mar " + stamps[i]);
  }
  const tags = [
    [42, "#00bfff", "2022.03.21 01:00"], [-22, RED, "2022.03.18 16:30"], [138, "#ffff00", "2022.03.21 02:00"],
    [906, GREEN, "2022.03.21 08:00"], [1290, GREEN, "2022.03.21 11:00"], [1802, RED, "2022.03.21 15:00"], [1994, RED, "2022.03.21 16:30"]
  ];
  for (const [x, fill, text] of tags) {
    add(g, "rect", { x: x - 70, y: 1274, width: 141, height: 19, fill });
    add(g, "text", { x, y: 1290, "text-anchor": "middle", fill: "#000" }, text);
  }
}
```
